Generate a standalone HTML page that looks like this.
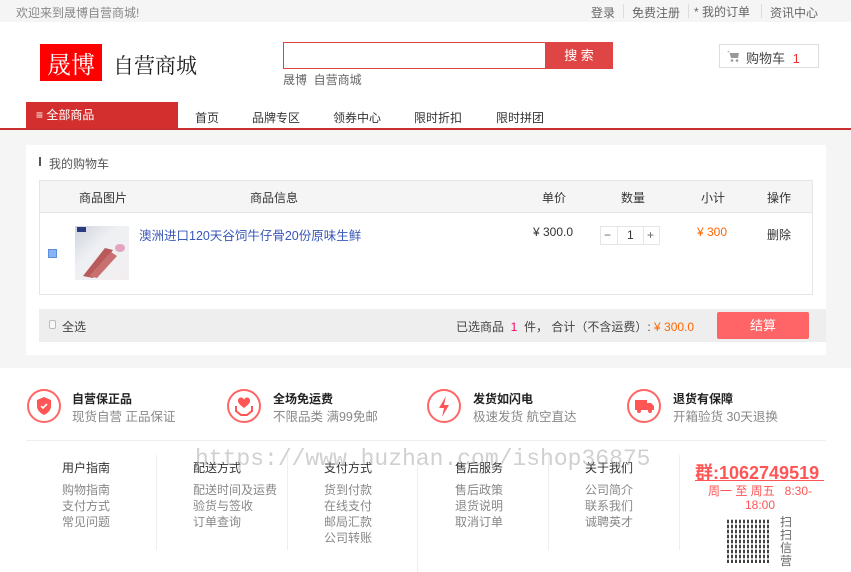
<!DOCTYPE html>
<html><head><meta charset="utf-8">
<style>
*{margin:0;padding:0;box-sizing:border-box}
body{width:851px;height:572px;overflow:hidden;background:#fff;font-family:"Liberation Sans","Noto Sans CJK SC",sans-serif;font-size:12px;color:#333;position:relative}
.a{position:absolute;white-space:nowrap}
.g{color:#666}
</style></head><body>
<div class="a" style="left:0;top:0;width:851px;height:22px;background:#f5f5f5"></div>
<div class="a g" style="left:16px;top:4px;color:#888">欢迎来到晟博自营商城!</div>
<div class="a g" style="left:591px;top:4px">登录</div>
<div class="a" style="left:623px;top:4px;width:1px;height:14px;background:#ddd"></div>
<div class="a g" style="left:632px;top:4px">免费注册</div>
<div class="a" style="left:688px;top:4px;width:1px;height:14px;background:#ddd"></div>
<div class="a g" style="left:694px;top:3px">* 我的订单</div>
<div class="a" style="left:761px;top:4px;width:1px;height:14px;background:#ddd"></div>
<div class="a g" style="left:770px;top:4px">资讯中心</div>
<div class="a" style="left:40px;top:44px;width:62px;height:37px;background:#f00;color:#fff;font-family:'Noto Serif CJK SC',serif;font-size:24px;line-height:37px;text-align:center">晟博</div>
<div class="a" style="left:113px;top:50px;font-family:'Noto Serif CJK SC',serif;font-size:21px;color:#222">自营商城</div>
<div class="a" style="left:283px;top:42px;width:330px;height:27px;border:1px solid #e04545"></div>
<div class="a" style="left:545px;top:42px;width:68px;height:27px;background:#e04545;color:#fff;font-size:13px;line-height:27px;text-align:center">搜 索</div>
<div class="a g" style="left:283px;top:71px">晟博&nbsp; 自营商城</div>
<div class="a" style="left:719px;top:44px;width:100px;height:24px;border:1px solid #ddd"></div>
<svg class="a" style="left:727px;top:50px" width="13" height="12" viewBox="0 0 13 12"><path d="M0 1h2l2 7h7l1-5H3" fill="#999"/><circle cx="5" cy="10.5" r="1.3" fill="#999"/><circle cx="10" cy="10.5" r="1.3" fill="#999"/></svg>
<div class="a" style="left:746px;top:48px;color:#444;font-size:13px">购物车 <span style="color:#e33;margin-left:4px">1</span></div>
<div class="a" style="left:26px;top:102px;width:152px;height:26px;background:#d32f2f;color:#fff;font-size:12px;line-height:26px;padding-left:10px">≡ 全部商品</div>
<div class="a" style="left:195px;top:109px">首页</div>
<div class="a" style="left:252px;top:109px">品牌专区</div>
<div class="a" style="left:333px;top:109px">领券中心</div>
<div class="a" style="left:414px;top:109px">限时折扣</div>
<div class="a" style="left:496px;top:109px">限时拼团</div>
<div class="a" style="left:0;top:128px;width:851px;height:2px;background:#c93030"></div>
<div class="a" style="left:0;top:130px;width:851px;height:238px;background:#f5f5f5"></div>
<div class="a" style="left:26px;top:145px;width:800px;height:210px;background:#fff"></div>
<div class="a" style="left:39px;top:157px;width:2px;height:9px;background:#555"></div>
<div class="a" style="left:49px;top:155px;color:#555">我的购物车</div>
<div class="a" style="left:39px;top:180px;width:774px;height:115px;border:1px solid #e5e5e5"></div>
<div class="a" style="left:40px;top:181px;width:772px;height:32px;background:#f5f5f5;border-bottom:1px solid #e5e5e5"></div>
<div class="a" style="left:79px;top:189px">商品图片</div>
<div class="a" style="left:250px;top:189px">商品信息</div>
<div class="a" style="left:542px;top:189px">单价</div>
<div class="a" style="left:621px;top:189px">数量</div>
<div class="a" style="left:701px;top:189px">小计</div>
<div class="a" style="left:767px;top:189px">操作</div>
<div class="a" style="left:48px;top:249px;width:9px;height:9px;background:#8ab4f8;border:1px solid #5b8fd9"></div>
<div class="a" style="left:75px;top:226px;width:54px;height:54px;background:linear-gradient(135deg,#cfd4dc 0%,#eef0f3 40%,#f3eef0 100%)"></div>
<div class="a" style="left:77px;top:227px;width:9px;height:5px;background:#2c3a80"></div>
<svg class="a" style="left:75px;top:226px" width="54" height="54"><path d="M8 50 L30 22 L38 24 L18 52Z" fill="#b85a5a"/><path d="M14 50 L36 26 L42 30 L22 52Z" fill="#c96f6f"/><ellipse cx="45" cy="22" rx="5" ry="4" fill="#e4a3bf"/></svg>
<div class="a" style="left:139px;top:225px;color:#3857b8;font-size:12.5px">澳洲进口120天谷饲牛仔骨20份原味生鲜</div>
<div class="a" style="left:533px;top:225px">¥ 300.0</div>
<div class="a" style="left:600px;top:226px;width:60px;height:19px;border:1px solid #e5e5e5"></div>
<div class="a" style="left:617px;top:226px;width:1px;height:19px;background:#e5e5e5"></div>
<div class="a" style="left:643px;top:226px;width:1px;height:19px;background:#e5e5e5"></div>
<div class="a g" style="left:604px;top:228px">−</div>
<div class="a" style="left:627px;top:228px">1</div>
<div class="a g" style="left:647px;top:228px">+</div>
<div class="a" style="left:697px;top:225px;color:#f60">¥ 300</div>
<div class="a" style="left:767px;top:226px">删除</div>
<div class="a" style="left:39px;top:309px;width:787px;height:33px;background:#eee"></div>
<div class="a" style="left:49px;top:320px;width:7px;height:9px;background:#f8f8f8;border:1px solid #bbb;border-radius:2px"></div>
<div class="a" style="left:62px;top:318px;color:#444">全选</div>
<div class="a" style="left:456px;top:318px;color:#444">已选商品 <span style="color:#f06">&nbsp;1&nbsp;</span> 件， 合计（不含运费）: <span style="color:#f60">¥ 300.0</span></div>
<div class="a" style="left:717px;top:312px;width:92px;height:27px;background:#ff6466;color:#fff;font-size:13px;line-height:27px;text-align:center;border-radius:2px">结算</div>
<svg class="a" style="left:26px;top:388px" width="36" height="36"><circle cx="18" cy="18" r="16" fill="none" stroke="#f66" stroke-width="2"/><path d="M18 9l7 3v6c0 4-3 7-7 9-4-2-7-5-7-9v-6z" fill="#f55"/><path d="M15 18l2 2 4-4" stroke="#fff" stroke-width="1.6" fill="none"/></svg>
<svg class="a" style="left:226px;top:388px" width="36" height="36"><circle cx="18" cy="18" r="16" fill="none" stroke="#f66" stroke-width="2"/><path d="M18 20c-4-3-6-5-6-7a3 3 0 0 1 6-1 3 3 0 0 1 6 1c0 2-2 4-6 7z" fill="#f55"/><path d="M10 18v5l5 4h3M26 18v5l-5 4h-3" stroke="#f55" stroke-width="2" fill="none"/></svg>
<svg class="a" style="left:426px;top:388px" width="36" height="36"><circle cx="18" cy="18" r="16" fill="none" stroke="#f66" stroke-width="2"/><path d="M20 8l-7 12h5l-2 9 7-12h-5z" fill="#f55"/></svg>
<svg class="a" style="left:626px;top:388px" width="36" height="36"><circle cx="18" cy="18" r="16" fill="none" stroke="#f66" stroke-width="2"/><path d="M9 12h12v10H9zM21 15h4l3 3v4h-7z" fill="#f55"/><circle cx="13" cy="23" r="2" fill="#f55"/><circle cx="24" cy="23" r="2" fill="#f55"/></svg>
<div class="a" style="left:72px;top:390px;font-weight:bold;color:#222">自营保正品</div>
<div class="a" style="left:72px;top:406px;color:#888;font-size:12.5px">现货自营 正品保证</div>
<div class="a" style="left:273px;top:390px;font-weight:bold;color:#222">全场免运费</div>
<div class="a" style="left:273px;top:406px;color:#888;font-size:12.5px">不限品类 满99免邮</div>
<div class="a" style="left:473px;top:390px;font-weight:bold;color:#222">发货如闪电</div>
<div class="a" style="left:473px;top:406px;color:#888;font-size:12.5px">极速发货 航空直达</div>
<div class="a" style="left:673px;top:390px;font-weight:bold;color:#222">退货有保障</div>
<div class="a" style="left:673px;top:406px;color:#888;font-size:12.5px">开箱验货 30天退换</div>
<div class="a" style="left:26px;top:440px;width:800px;height:1px;background:#eee"></div>
<div class="a" style="left:156px;top:455px;width:1px;height:95px;background:#eee"></div>
<div class="a" style="left:287px;top:455px;width:1px;height:95px;background:#eee"></div>
<div class="a" style="left:417px;top:455px;width:1px;height:117px;background:#eee"></div>
<div class="a" style="left:548px;top:455px;width:1px;height:95px;background:#eee"></div>
<div class="a" style="left:679px;top:455px;width:1px;height:95px;background:#eee"></div>
<div class="a" style="left:62px;top:459px">用户指南</div>
<div class="a" style="left:193px;top:459px">配送方式</div>
<div class="a" style="left:324px;top:459px">支付方式</div>
<div class="a" style="left:455px;top:459px">售后服务</div>
<div class="a" style="left:585px;top:459px">关于我们</div>
<div class="a" style="left:62px;top:482px;line-height:16px;color:#888">购物指南<br>支付方式<br>常见问题</div>
<div class="a" style="left:193px;top:482px;line-height:16px;color:#888">配送时间及运费<br>验货与签收<br>订单查询</div>
<div class="a" style="left:324px;top:482px;line-height:16px;color:#888">货到付款<br>在线支付<br>邮局汇款<br>公司转账</div>
<div class="a" style="left:455px;top:482px;line-height:16px;color:#888">售后政策<br>退货说明<br>取消订单</div>
<div class="a" style="left:585px;top:482px;line-height:16px;color:#888">公司简介<br>联系我们<br>诚聘英才</div>
<div class="a" style="left:195px;top:446px;font-family:'Liberation Mono',monospace;font-size:23px;color:rgba(150,150,150,0.45)">https://www.huzhan.com/ishop36875</div>
<div class="a" style="left:695px;top:459px;color:#f55;font-size:18px;font-weight:bold">群:1062749519</div>
<div class="a" style="left:695px;top:480px;width:129px;height:1px;background:#f55"></div>
<div class="a" style="left:700px;top:484px;width:120px;text-align:center;white-space:normal;color:#f55;line-height:14px">周一 至 周五 &nbsp; 8:30-18:00</div>
<div class="a" style="left:727px;top:519px;width:44px;height:44px;background:repeating-linear-gradient(90deg,#222 0 2px,#fff 2px 4px),#222;opacity:.85"></div>
<div class="a" style="left:727px;top:519px;width:44px;height:44px;background:repeating-linear-gradient(0deg,transparent 0 3px,rgba(255,255,255,.7) 3px 5px)"></div>
<div class="a" style="left:780px;top:516px;width:13px;white-space:normal;line-height:13px;color:#666">扫扫信营</div>
</body></html>
